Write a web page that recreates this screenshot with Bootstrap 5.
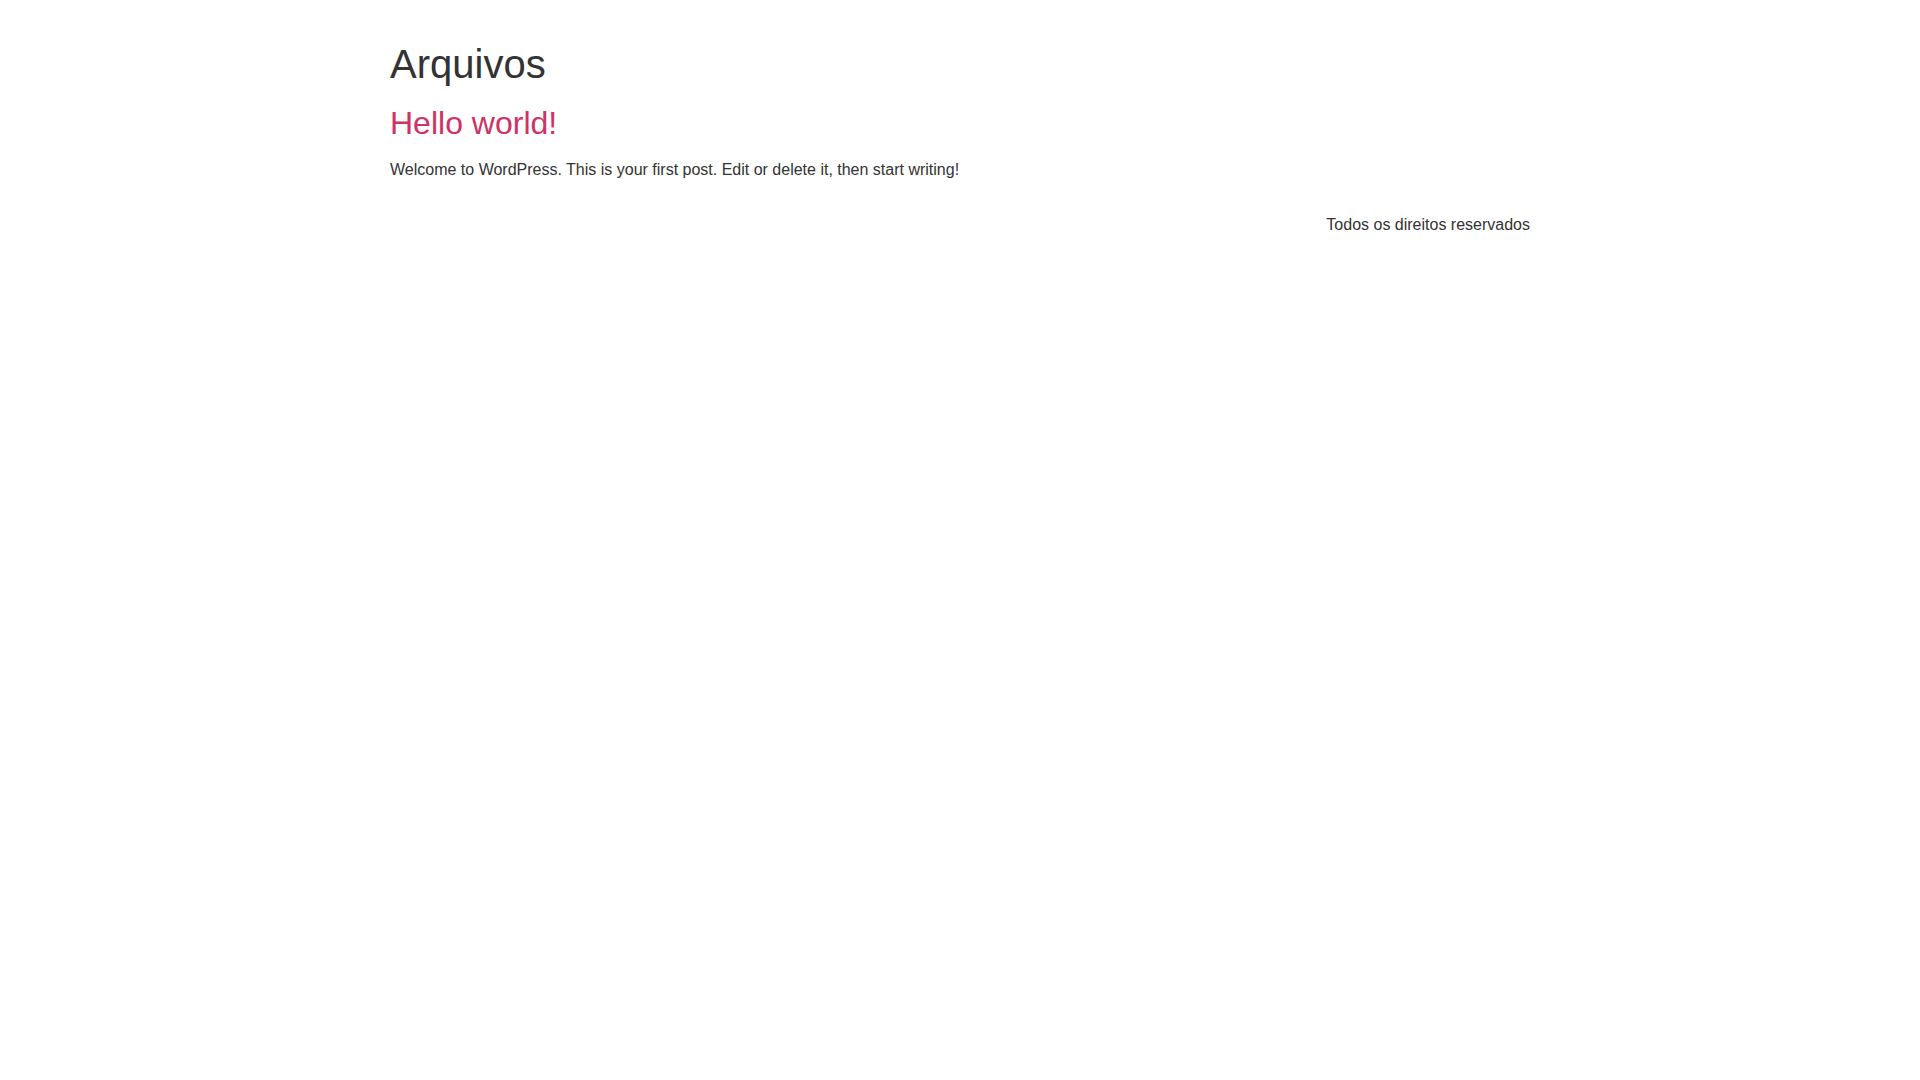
<!DOCTYPE html>
<html lang="pt-BR">
<head>
<meta charset="utf-8">
<meta name="viewport" content="width=device-width, initial-scale=1">
<title>Arquivos</title>
<link href="https://cdn.jsdelivr.net/npm/bootstrap@5.3.0/dist/css/bootstrap.min.css" rel="stylesheet">
<style>
body { font-family: "Liberation Sans", Arial, sans-serif; font-size: 16px; line-height: 24px; color: #333; }
.site-wrap { max-width: 1140px; }
.page-title { font-size: 40px; line-height: 48px; }
.entry-title { font-size: 32px; line-height: 38px; }
.entry-title a { color: #c36; }
.entry-title a:hover { color: #336; }
.site-info { margin: 15px 0; }
</style>
</head>
<body>
<main class="site-wrap mx-auto">
  <header class="pt-4">
    <h1 class="page-title fw-normal mt-3 mb-3">Arquivos</h1>
  </header>
  <article>
    <h2 class="entry-title fw-normal mb-3"><a class="text-decoration-none" href="#">Hello world!</a></h2>
    <p class="mb-0">Welcome to WordPress. This is your first post. Edit or delete it, then start writing!</p>
  </article>
</main>
<footer class="site-wrap mx-auto d-flex justify-content-end py-3">
  <p class="site-info">Todos os direitos reservados</p>
</footer>
<script src="https://cdn.jsdelivr.net/npm/bootstrap@5.3.0/dist/js/bootstrap.bundle.min.js"></script>
</body>
</html>
